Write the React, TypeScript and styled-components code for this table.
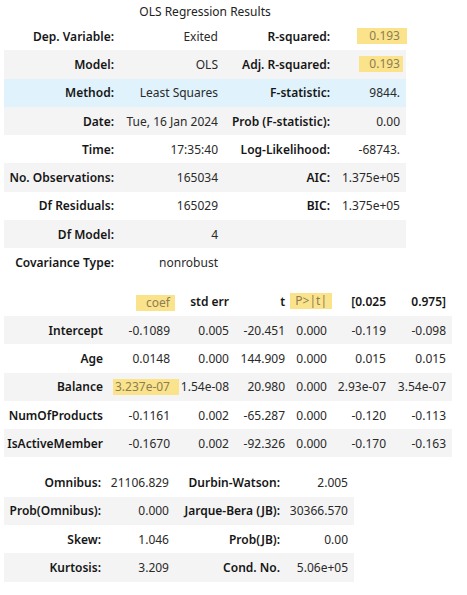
import React from "react";
import styled, { createGlobalStyle } from "styled-components";

const Global = createGlobalStyle`
  html, body { margin: 0; padding: 0; background: #fff; }
  body {
    font-family: "Noto Sans", "Open Sans", "Liberation Sans", sans-serif;
    font-size: 12px;
    color: #1b1b1b;
  }
`;

const Page = styled.div`
  display: flex;
  flex-direction: column;
  align-items: flex-start;
  padding: 0 0 0 4px;
`;

const Caption = styled.div`
  width: 402px;
  height: 22px;
  line-height: 24px;
  text-align: center;
  color: #222;
  font-size: 12px;
`;

const Table = styled.div<{ $cols: string; $mt?: number }>`
  display: grid;
  grid-template-columns: ${(p) => p.$cols};
  margin-top: ${(p) => p.$mt ?? 0}px;
`;

const Row = styled.div<{ $tone?: "white" | "gray" | "hover" }>`
  display: contents;
  & > div {
    background: ${(p) =>
      p.$tone === "gray" ? "#f4f4f4" : p.$tone === "hover" ? "#e0f3fc" : "#fff"};
  }
`;

const Cell = styled.div<{ $bold?: boolean }>`
  height: 28.3px;
  display: flex;
  align-items: center;
  justify-content: flex-end;
  padding: 0 6px;
  white-space: nowrap;
  font-weight: ${(p) => (p.$bold ? 600 : 400)};
  color: ${(p) => (p.$bold ? "#161616" : "#2a2a2a")};
`;

const Mark = styled.span<{ $l: number; $r: number; $mr?: number; $dy?: number }>`
  display: inline-block;
  background: #fbe38c;
  color: #8c7d55;
  font-weight: 400;
  line-height: 16px;
  height: 16px;
  padding: 0 ${(p) => p.$r}px 0 ${(p) => p.$l}px;
  margin-right: ${(p) => -(p.$mr ?? 0)}px;
  position: relative;
  top: ${(p) => p.$dy ?? 0}px;
`;

type C = React.ReactNode;
type Tone = "white" | "gray" | "hover";

const topRows: { tone: Tone; c: C[] }[] = [
  { tone: "white", c: ["Dep. Variable:", "Exited", "R-squared:", <Mark $l={12} $r={7} $mr={7}>0.193</Mark>] },
  { tone: "gray", c: ["Model:", "OLS", "Adj. R-squared:", <Mark $l={10} $r={3} $mr={3}>0.193</Mark>] },
  { tone: "hover", c: ["Method:", "Least Squares", "F-statistic:", "9844."] },
  { tone: "gray", c: ["Date:", "Tue, 16 Jan 2024", "Prob (F-statistic):", "0.00"] },
  { tone: "white", c: ["Time:", "17:35:40", "Log-Likelihood:", "-68743."] },
  { tone: "gray", c: ["No. Observations:", "165034", "AIC:", "1.375e+05"] },
  { tone: "white", c: ["Df Residuals:", "165029", "BIC:", "1.375e+05"] },
  { tone: "gray", c: ["Df Model:", "4", "", ""] },
  { tone: "white", c: ["Covariance Type:", "nonrobust", "", ""] },
];

const coefHead: { c: C; bold: boolean }[] = [
  { c: "", bold: true },
  { c: <Mark $l={10} $r={5} $mr={5} $dy={1}>coef</Mark>, bold: false },
  { c: "std err", bold: true },
  { c: "t", bold: true },
  { c: <Mark $l={5} $r={5} $mr={5} $dy={-1}>P&gt;|t|</Mark>, bold: false },
  { c: "[0.025", bold: true },
  { c: "0.975]", bold: true },
];

const coefRows: C[][] = [
  ["Intercept", "-0.1089", "0.005", "-20.451", "0.000", "-0.119", "-0.098"],
  ["Age", "0.0148", "0.000", "144.909", "0.000", "0.015", "0.015"],
  ["Balance", <Mark $l={2} $r={9} $mr={9}>3.237e-07</Mark>, "1.54e-08", "20.980", "0.000", "2.93e-07", "3.54e-07"],
  ["NumOfProducts", "-0.1161", "0.002", "-65.287", "0.000", "-0.120", "-0.113"],
  ["IsActiveMember", "-0.1670", "0.002", "-92.326", "0.000", "-0.170", "-0.163"],
];

const diagRows: string[][] = [
  ["Omnibus:", "21106.829", "Durbin-Watson:", "2.005"],
  ["Prob(Omnibus):", "0.000", "Jarque-Bera (JB):", "30366.570"],
  ["Skew:", "1.046", "Prob(JB):", "0.00"],
  ["Kurtosis:", "3.209", "Cond. No.", "5.06e+05"],
];

const stripe = (i: number): Tone => (i % 2 === 1 ? "gray" : "white");

export default function App() {
  return (
    <>
      <Global />
      <Page>
        <Caption>OLS Regression Results</Caption>
        <Table $cols="116px 104px 112px 70px">
          {topRows.map((r, i) => (
            <Row key={i} $tone={r.tone}>
              {r.c.map((v, j) => (
                <Cell key={j} $bold={j % 2 === 0}>
                  {v}
                </Cell>
              ))}
            </Row>
          ))}
        </Table>
        <Table $cols="105px 67px 59px 56px 42px 59px 60px" $mt={11}>
          <Row $tone="white">
            {coefHead.map((h, j) => (
              <Cell key={j} $bold={h.bold}>
                {h.c}
              </Cell>
            ))}
          </Row>
          {coefRows.map((r, i) => (
            <Row key={i} $tone={i % 2 === 0 ? "gray" : "white"}>
              {r.map((v, j) => (
                <Cell key={j} $bold={j === 0}>
                  {v}
                </Cell>
              ))}
            </Row>
          ))}
        </Table>
        <Table $cols="103px 68px 111px 68px" $mt={11}>
          {diagRows.map((r, i) => (
            <Row key={i} $tone={stripe(i)}>
              {r.map((v, j) => (
                <Cell key={j} $bold={j % 2 === 0}>
                  {v}
                </Cell>
              ))}
            </Row>
          ))}
        </Table>
      </Page>
    </>
  );
}
